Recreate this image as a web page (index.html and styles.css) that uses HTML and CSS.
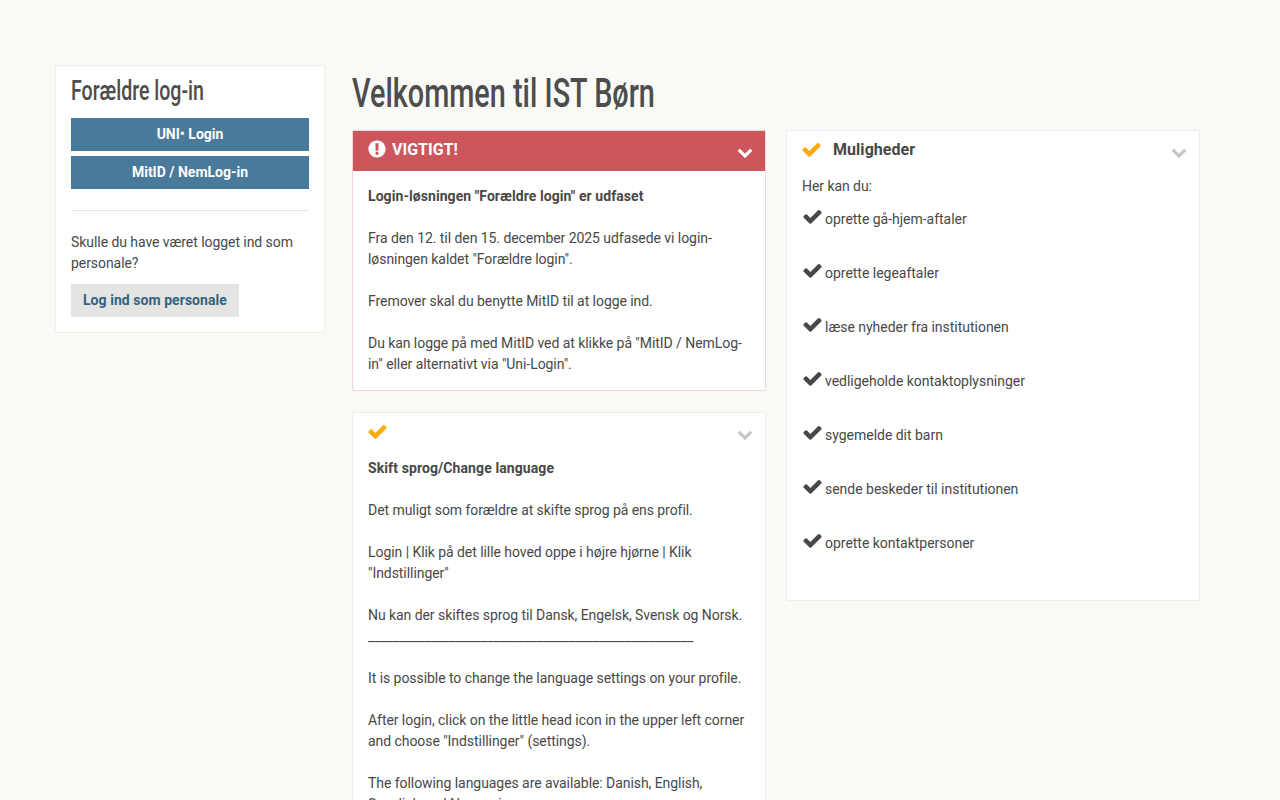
FILE: index.html

```html
<!DOCTYPE HTML>
<html>
<head>
  <meta charset="UTF-8">
  <title>Velkommen til IST Børn</title>
  <link rel="stylesheet" href="styles.css">
</head>
<body>
  <svg class="defs" width="0" height="0">
    <symbol id="i-check" viewBox="0 0 1792 1792"><path d="M1671 566q0 40-28 68l-724 724-136 136q-28 28-68 28t-68-28l-136-136-362-362q-28-28-28-68t28-68l136-136q28-28 68-28t68 28l294 295 656-657q28-28 68-28t68 28l136 136q28 28 28 68z"/></symbol>
    <symbol id="i-chevron" viewBox="0 0 1792 1792"><path d="M1683 808l-742 741q-19 19-45 19t-45-19l-742-741q-19-19-19-45.5t19-45.5l166-165q19-19 45-19t45 19l531 531 531-531q19-19 45-19t45 19l166 165q19 19 19 45.5t-19 45.5z"/></symbol>
    <symbol id="i-alert" viewBox="0 0 1792 1792"><path d="M896 128q209 0 385.5 103t279.5 279.5 103 385.5-103 385.5-279.5 279.5-385.5 103-385.5-103-279.5-279.5-103-385.5 103-385.5 279.5-279.5 385.5-103zm128 1247v-190q0-14-9-23.5t-22-9.5h-192q-13 0-23 10t-10 23v190q0 13 10 23t23 10h192q13 0 22-9.5t9-23.5zm-2-344l18-621q0-12-10-18-10-8-24-8h-220q-14 0-24 8-10 6-10 18l17 621q0 10 10 17.5t24 7.5h185q14 0 23.5-7.5t10.5-17.5z"/></symbol>
  </svg>

  <div class="page">
    <!--login-->
    <aside class="login">
      <h2>Forældre log-in</h2>
      <a class="btn" href="#">UNI• Login</a>
      <a class="btn" href="#">MitID / NemLog-in</a>
      <hr>
      <p>Skulle du have været logget ind som personale?</p>
      <a class="btn-staff" href="#">Log ind som personale</a>
    </aside>

    <main class="main">
      <h1>Velkommen til IST Børn</h1>
      <div class="cols">
        <div class="col">
          <section class="card card-alert">
            <div class="alert-head">
              <svg class="i-alert"><use href="#i-alert"/></svg>
              <span>VIGTIGT!</span>
              <svg class="chevron"><use href="#i-chevron"/></svg>
            </div>
            <div class="alert-body">
              <p><b class="lead">Login-løsningen "Forældre login" er udfaset</b></p>
              <p>Fra den 12. til den 15. december 2025 udfasede vi login-løsningen kaldet "Forældre login".</p>
              <p>Fremover skal du benytte MitID til at logge ind.</p>
              <p>Du kan logge på med MitID ved at klikke på "MitID / NemLog-in" eller alternativt via "Uni-Login".</p>
            </div>
          </section>

          <section class="card">
            <div class="card-head">
              <svg class="i-mark"><use href="#i-check"/></svg>
              <svg class="chevron"><use href="#i-chevron"/></svg>
            </div>
            <div class="card-body">
              <p><b>Skift sprog/Change language</b></p>
              <p>Det muligt som forældre at skifte sprog på ens profil.</p>
              <p>Login | Klik på det lille hoved oppe i højre hjørne | Klik "Indstillinger"</p>
              <p>Nu kan der skiftes sprog til Dansk, Engelsk, Svensk og Norsk.<br>____________________________________________________</p>
              <p>It is possible to change the language settings on your profile.</p>
              <p>After login, click on the little head icon in the upper left corner and choose "Indstillinger" (settings).</p>
              <p>The following languages are available: Danish, English, Swedish and Norwegian.</p>
            </div>
          </section>
        </div>

        <div class="col">
          <section class="card">
            <div class="card-head">
              <svg class="i-mark"><use href="#i-check"/></svg>
              <h3>Muligheder</h3>
              <svg class="chevron"><use href="#i-chevron"/></svg>
            </div>
            <div class="card-body card-body-list">
              <p class="intro">Her kan du:</p>
              <ul class="checks">
                <li><svg><use href="#i-check"/></svg>oprette gå-hjem-aftaler</li>
                <li><svg><use href="#i-check"/></svg>oprette legeaftaler</li>
                <li><svg><use href="#i-check"/></svg>læse nyheder fra institutionen</li>
                <li><svg><use href="#i-check"/></svg>vedligeholde kontaktoplysninger</li>
                <li><svg><use href="#i-check"/></svg>sygemelde dit barn</li>
                <li><svg><use href="#i-check"/></svg>sende beskeder til institutionen</li>
                <li><svg><use href="#i-check"/></svg>oprette kontaktpersoner</li>
              </ul>
            </div>
          </section>
        </div>
      </div>
    </main>
  </div>
</body>
</html>
```

FILE: styles.css

```css
body{
  margin: 0;
  background-color: #f9faf6;
  font-family: Roboto, "Liberation Sans", sans-serif;
  font-size: 14px;
  line-height: 21px;
  letter-spacing: -.06px;
  color: #484848;
}
h1,h2,h3,p,ul{margin: 0;padding: 0;}
ul{list-style: none;}
b{letter-spacing: .1px;}
svg{fill: currentColor;}
.defs{position: absolute;}

.page{
  display: flex;
  align-items: flex-start;
  gap: 27px;
  padding: 65px 0 0 55px;
}

/* login */
.login{
  box-sizing: border-box;
  flex: none;
  width: 270px;
  padding: 7px 15px 15px;
  background-color: #fff;
  border: 1px solid #eeeee9;
  border-radius: 2px;
}
.login h2{
  margin-bottom: 9px;
  font-size: 27px;
  line-height: 36px;
  font-weight: 500;
  letter-spacing: 0;
  color: #4d4d4d;
  white-space: nowrap;
  transform: scaleX(.725);
  transform-origin: left;
}
.btn{
  display: block;
  width: 238px;
  height: 33px;
  margin-bottom: 5px;
  line-height: 33px;
  text-align: center;
  background-color: #4a7a9a;
  color: #fff;
  font-weight: 700;
  letter-spacing: 0;
  text-decoration: none;
}
.login hr{
  height: 1px;
  margin: 21px 0;
  border: 0;
  background-color: #e6e6e3;
}
.login p{margin-bottom: 10px;}
.btn-staff{
  display: inline-block;
  vertical-align: top;
  height: 33px;
  padding: 0 12px;
  line-height: 33px;
  background-color: #e4e4e2;
  color: #336380;
  font-weight: 700;
  letter-spacing: .05px;
  text-decoration: none;
}

/* main */
.main{width: 848px;}
.main h1{
  height: 65px;
  font-size: 41px;
  line-height: 56px;
  font-weight: 500;
  letter-spacing: 0;
  color: #4d4d4d;
  white-space: nowrap;
  transform: scaleX(.703);
  transform-origin: left;
}
.cols{
  display: grid;
  grid-template-columns: 414px 414px;
  gap: 20px;
}
.col{
  display: flex;
  flex-direction: column;
  gap: 21px;
}

/* cards */
.card{
  background-color: #fff;
  border: 1px solid #eeeee9;
  border-radius: 2px;
}
.card-alert{border-color: #f5d5d9;}
.card-head{
  display: flex;
  align-items: center;
  height: 45px;
  padding: 0 12px 9px 15px;
  box-sizing: border-box;
}
.card-head h3{
  margin-left: 11px;
  font-size: 16px;
  font-weight: 700;
  letter-spacing: .05px;
}
.alert-head{
  display: flex;
  align-items: center;
  height: 40px;
  padding: 0 12px 3px 15px;
  box-sizing: border-box;
  background-color: #cd565c;
  color: #fff;
  font-size: 16px;
  font-weight: 700;
  letter-spacing: 0;
}
.alert-body{padding: 15px;}
.card-body{padding: 0 15px 14px;}
.card-body-list{padding-bottom: 16px;}
.alert-body p,.card-body p{margin-bottom: 21px;}
.alert-body p:last-child,.card-body p:last-child{margin-bottom: 0;}
.card-body .intro{margin-bottom: 0;}
.lead{letter-spacing: .07px;}

.i-alert{width: 20px;height: 20px;margin: -1px 5px 1px -1px;}
.i-mark{width: 21px;height: 21px;margin-left: -1px;color: #fcaa0c;}
.chevron{width: 16px;height: 16px;margin: 3px 0 -3px auto;color: #c6c6c6;}
.alert-head .chevron{margin: 2px 0 -2px auto;color: #fff;}

.checks{margin-top: 9px;letter-spacing: -.02px;}
.checks li{height: 21px;margin-bottom: 33px;}
.checks svg{
  width: 21px;
  height: 21px;
  margin-right: 2px;
  vertical-align: -3px;
}
```
